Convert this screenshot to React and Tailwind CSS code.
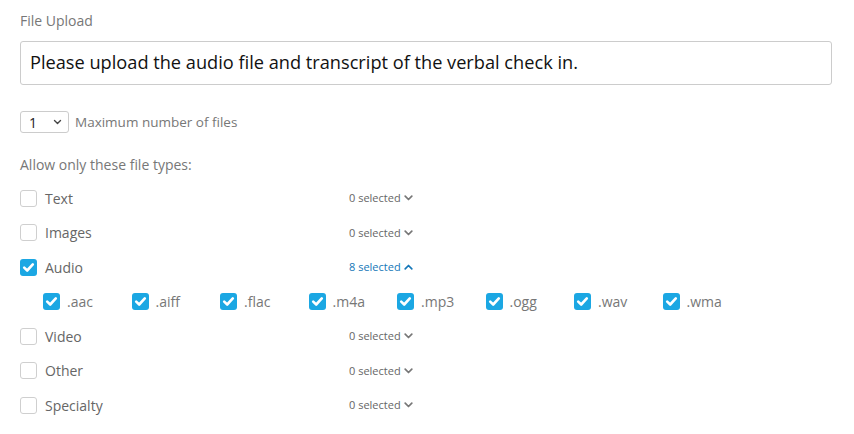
import React from "react";

function Check({ checked, className = "" }) {
  if (checked) {
    return (
      <span className={"flex h-[17px] w-[17px] shrink-0 items-center justify-center rounded-[3px] bg-[#1ba7e3] " + className}>
        <svg width="13" height="13" viewBox="0 0 13 13" fill="none">
          <path d="M2.2 6.6 L5.2 9.5 L10.8 3.4" stroke="#fff" strokeWidth="2.6" strokeLinecap="round" strokeLinejoin="round" />
        </svg>
      </span>
    );
  }
  return <span className={"block h-[17px] w-[17px] shrink-0 rounded-[3px] border border-[#cfcfcf] bg-white " + className} />;
}

function Chevron({ up, color }) {
  return (
    <svg width="9" height="6" viewBox="0 0 9 6" fill="none" className="ml-[3px]">
      <path d={up ? "M1.2 4.8 L4.5 1.5 L7.8 4.8" : "M1.2 1.2 L4.5 4.5 L7.8 1.2"} stroke={color} strokeWidth="1.7" strokeLinecap="round" strokeLinejoin="round" />
    </svg>
  );
}

function Row({ label, checked, count, open }) {
  return (
    <div className="flex h-[34.5px] items-center">
      <div className="flex w-[329px] items-center">
        <Check checked={checked} />
        <span className="ml-[8px] text-[14px] text-[#666]">{label}</span>
      </div>
      <div className={"flex items-center text-[11px] " + (open ? "text-[#1577b8]" : "text-[#666]")}>
        <span>{count} selected</span>
        <Chevron up={open} color={open ? "#1577b8" : "#777"} />
      </div>
    </div>
  );
}

export default function App() {
  const audio = [".aac", ".aiff", ".flac", ".m4a", ".mp3", ".ogg", ".wav", ".wma"];
  return (
    <div className="min-h-[434px] bg-white px-5 pt-[11px]" style={{ fontFamily: "'Open Sans', sans-serif" }}>
      <div className="h-[20px] text-[14px] leading-[20px] text-[#777]">File Upload</div>
      <div className="mt-[10px] flex h-[44px] w-[812px] items-center rounded-[3px] border border-[#cccccc] px-[9px] text-[18.2px] text-[#111]">
        Please upload the audio file and transcript of the verbal check in.
      </div>
      <div className="mt-[26px] flex items-center">
        <div className="flex h-[22px] w-[49px] items-center justify-between rounded-[3px] border border-[#cccccc] pl-[8px] pr-[6px] text-[14px] text-[#222]">
          <span>1</span>
          <svg width="9" height="6" viewBox="0 0 9 6" fill="none">
            <path d="M1.5 1.5 L4.5 4.5 L7.5 1.5" stroke="#444" strokeWidth="1.4" strokeLinecap="round" strokeLinejoin="round" />
          </svg>
        </div>
        <span className="ml-[6px] text-[13.5px] text-[#777]">Maximum number of files</span>
      </div>
      <div className="mt-[22px] h-[20px] text-[14px] leading-[20px] text-[#777]">Allow only these file types:</div>
      <div className="mt-[6px]">
        <Row label="Text" count={0} />
        <Row label="Images" count={0} />
        <Row label="Audio" checked count={8} open />
        <div className="flex h-[34.5px] items-center pl-[23px]">
          {audio.map((a) => (
            <div key={a} className="flex w-[88.5px] items-center">
              <Check checked />
              <span className="ml-[7px] text-[14px] text-[#777]">{a}</span>
            </div>
          ))}
        </div>
        <Row label="Video" count={0} />
        <Row label="Other" count={0} />
        <Row label="Specialty" count={0} />
      </div>
    </div>
  );
}
